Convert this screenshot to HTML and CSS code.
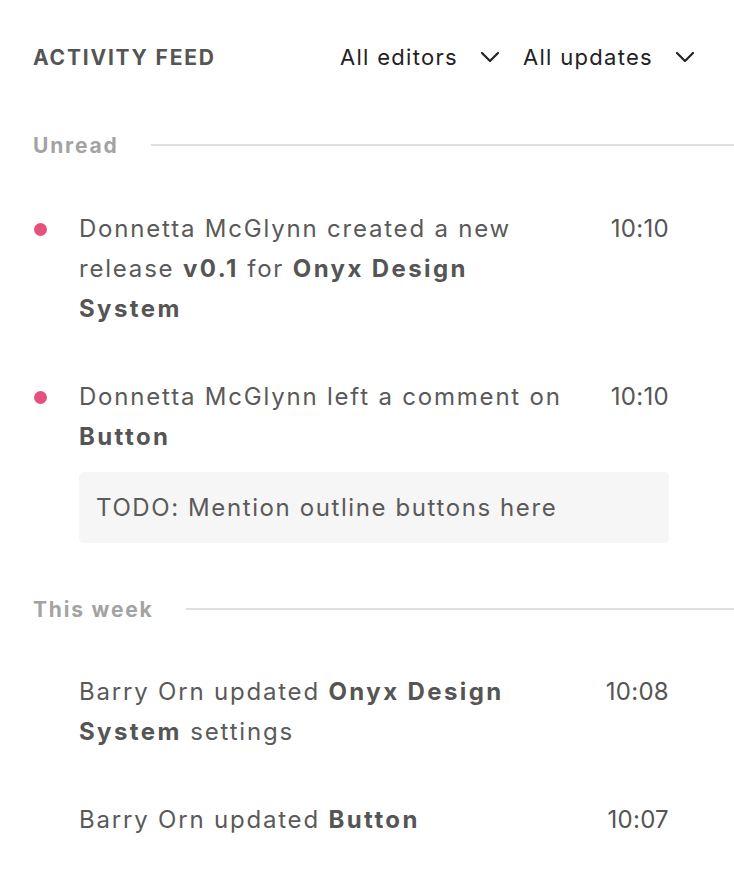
FILE: index.html
```html
<!DOCTYPE html>
<html>
<head>
<meta charset="utf-8">
<link rel="stylesheet" href="styles.css">
</head>
<body>
<div class="feed">
  <header class="feed-header">
    <h1 class="feed-title">ACTIVITY FEED</h1>
    <div class="filters">
      <button class="filter">All editors
        <svg class="chev" width="20" height="12" viewBox="0 0 20 12"><path d="M2 2 L10 10 L18 2" fill="none" stroke="#222" stroke-width="2.2" stroke-linecap="round" stroke-linejoin="round"/></svg>
      </button>
      <button class="filter">All updates
        <svg class="chev" width="20" height="12" viewBox="0 0 20 12"><path d="M2 2 L10 10 L18 2" fill="none" stroke="#222" stroke-width="2.2" stroke-linecap="round" stroke-linejoin="round"/></svg>
      </button>
    </div>
  </header>

  <section class="group">
    <div class="group-head"><span class="group-label">Unread</span><span class="rule"></span></div>
    <div class="items">
      <div class="item">
        <span class="dot"></span>
        <div class="text">Donnetta McGlynn created a new release <b>v0.1</b> for <b>Onyx Design System</b></div>
        <div class="time">10:10</div>
      </div>
      <div class="item">
        <span class="dot"></span>
        <div class="text">Donnetta McGlynn left a comment on <b>Button</b></div>
        <div class="time">10:10</div>
        <div class="comment">TODO: Mention outline buttons here</div>
      </div>
    </div>
  </section>

  <section class="group group-2">
    <div class="group-head"><span class="group-label">This week</span><span class="rule"></span></div>
    <div class="items items-2">
      <div class="item">
        <span class="nodot"></span>
        <div class="text">Barry Orn updated <b>Onyx Design System</b> settings</div>
        <div class="time">10:08</div>
      </div>
      <div class="item">
        <span class="nodot"></span>
        <div class="text">Barry Orn updated <b>Button</b></div>
        <div class="time">10:07</div>
      </div>
    </div>
  </section>
</div>
</body>
</html>
```

FILE: styles.css
```css
* { box-sizing: border-box; }
html, body { margin: 0; padding: 0; background: #fff; }
body {
  font-family: Inter, "Open Sans", "Liberation Sans", sans-serif;
  color: #5a5a5a;
}
.feed { padding: 37px 0 0 33px; }

.feed-header {
  display: flex;
  align-items: center;
  justify-content: space-between;
  padding-right: 39px;
  height: 40px;
}
.feed-title {
  margin: 0;
  font-size: 21px;
  font-weight: 700;
  letter-spacing: 1.8px;
  color: #555;
}
.filters { display: flex; gap: 23px; }
.filter {
  display: flex;
  align-items: center;
  gap: 22px;
  border: 0;
  background: none;
  padding: 0;
  font: inherit;
  font-size: 22px;
  letter-spacing: 1.3px;
  color: #222;
  cursor: pointer;
}
.chev { display: block; margin-top: 0; }

.group { margin-top: 56px; }
.group-2 { margin-top: 54px; }
.group-head {
  display: flex;
  align-items: center;
  gap: 33px;
  height: 24px;
}
.group-label {
  font-size: 21px;
  font-weight: 700;
  letter-spacing: 1.8px;
  color: #a3a3a3;
  white-space: nowrap;
}
.rule { flex: 1; height: 2px; background: #e0e0e0; }

.items {
  margin-top: 52px;
  display: flex;
  flex-direction: column;
  gap: 48px;
  padding-right: 65px;
}
.items-2 { margin-top: 51px; }
.item {
  display: grid;
  grid-template-columns: 46px 1fr auto;
  column-gap: 0;
  font-size: 24px;
  line-height: 40px;
  letter-spacing: 1.8px;
}
.dot {
  width: 13px;
  height: 13px;
  border-radius: 50%;
  background: #e5507c;
  margin-top: 14px;
  margin-left: 1px;
}
.text b { font-weight: 700; color: #555; letter-spacing: 2.4px; }
.time {
  text-align: right;
  color: #555;
  letter-spacing: 0.3px;
  padding-left: 46px;
}
.comment {
  grid-column: 2 / 4;
  margin-top: 15px;
  background: #f6f6f6;
  border-radius: 5px;
  padding: 16px 17px 15px;
  line-height: 40px;
  letter-spacing: 1.6px;
  white-space: nowrap;
}
```
